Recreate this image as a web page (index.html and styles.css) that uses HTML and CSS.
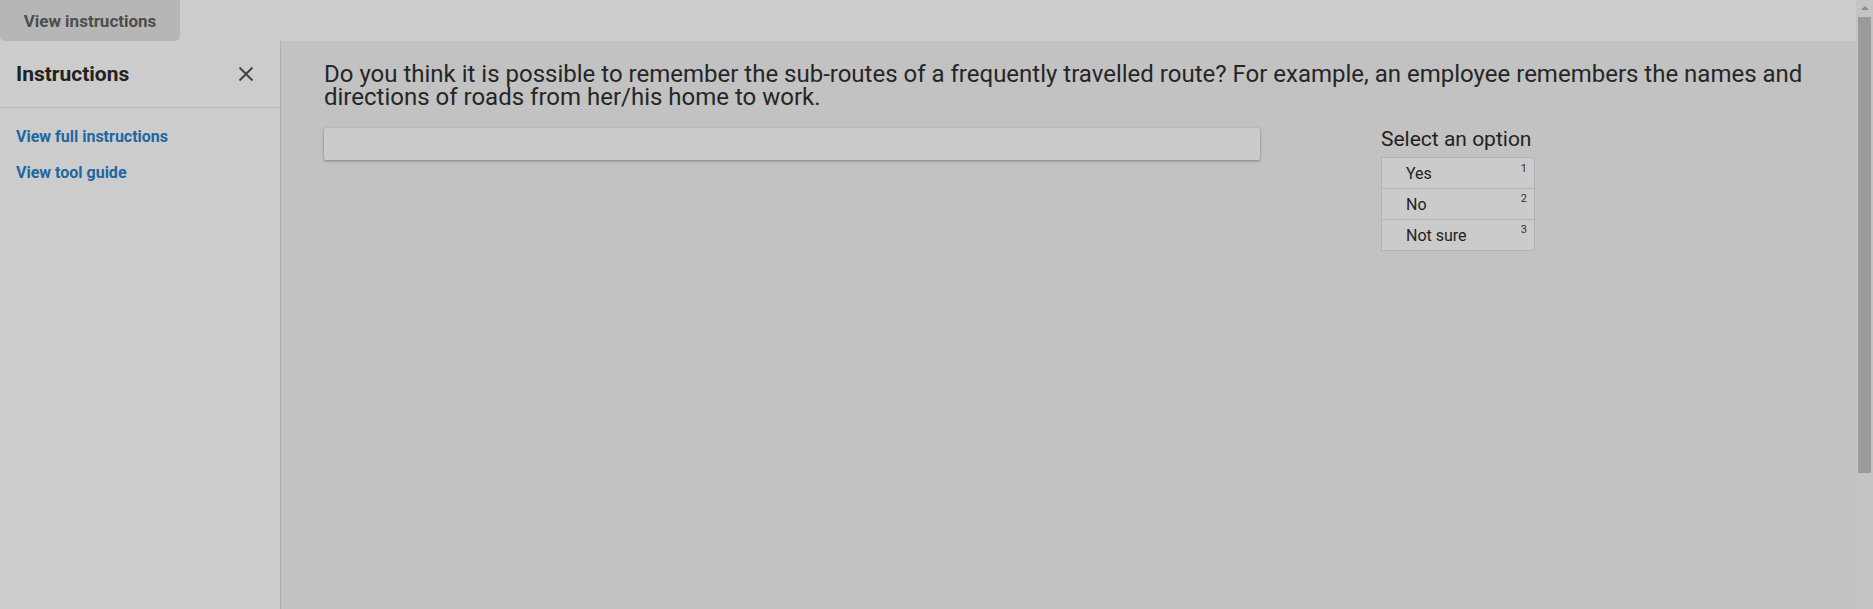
FILE: index.html
```html
<!DOCTYPE html>
<html>
<head>
<meta charset="utf-8">
<link rel="stylesheet" href="styles.css">
</head>
<body>
<div class="app">
  <div class="page">
    <div class="topbar">
      <button class="view-btn">View instructions</button>
    </div>
    <div class="body-row">
      <aside class="sidebar">
        <div class="side-head">
          <span class="side-title">Instructions</span>
          <svg class="close" width="16" height="16" viewBox="0 0 16 16"><path d="M1.5 1.5 L14.5 14.5 M14.5 1.5 L1.5 14.5" stroke="#444" stroke-width="2" fill="none"/></svg>
        </div>
        <div class="side-links">
          <a class="side-link">View full instructions</a>
          <a class="side-link">View tool guide</a>
        </div>
      </aside>
      <main class="main">
        <p class="question">Do you think it is possible to remember the sub-routes of a frequently travelled route? For example, an employee remembers the names and directions of roads from her/his home to work.</p>
        <div class="task">
          <div class="answer-box"></div>
          <div class="options">
            <div class="options-title">Select an option</div>
            <ul class="option-list">
              <li class="option"><span>Yes</span><sup class="key">1</sup></li>
              <li class="option"><span>No</span><sup class="key">2</sup></li>
              <li class="option"><span>Not sure</span><sup class="key">3</sup></li>
            </ul>
          </div>
        </div>
      </main>
    </div>
  </div>
  <div class="scrollbar">
    <div class="arrow"></div>
    <div class="thumb"></div>
  </div>
</div>
</body>
</html>
```

FILE: styles.css
```css
* { box-sizing: border-box; }
html, body { margin: 0; padding: 0; height: 100%; overflow: hidden; }
body {
  font-family: Roboto, "Liberation Sans", sans-serif;
  background: #c2c2c2;
  color: #222;
}
.app { display: flex; height: 609px; }
.page { flex: 1; display: flex; flex-direction: column; min-width: 0; }
.topbar {
  height: 41px;
  background: #cccccc;
  display: flex;
  flex-shrink: 0;
}
.view-btn {
  width: 180px;
  height: 41px;
  border: none;
  background: #b6b6b6;
  border-radius: 0 0 5px 5px;
  font-family: Roboto, "Liberation Sans", sans-serif;
  font-weight: 700;
  font-size: 17px;
  color: #4d4d4d;
  padding: 0;
  text-align: center;
}
.body-row { flex: 1; display: flex; min-height: 0; }
.sidebar {
  width: 281px;
  flex-shrink: 0;
  background: #cccccc;
  border-right: 1px solid #adadad;
}
.side-head {
  height: 67px;
  border-bottom: 1px solid #bababa;
  display: flex;
  align-items: center;
  justify-content: space-between;
  padding: 0 26px 0 16px;
}
.side-title { font-size: 21px; font-weight: 700; color: #222; }
.close { display: block; }
.side-links { display: flex; flex-direction: column; padding: 20px 16px 0; gap: 18px; }
.side-link {
  font-size: 16px;
  font-weight: 700;
  color: #1d67a3;
  line-height: 18px;
}
.main { flex: 1; padding: 22px 0 0 43px; min-width: 0; }
.question {
  margin: 0;
  font-size: 24px;
  line-height: 23px;
  color: #262626;
  max-width: 1500px;
}
.task { display: flex; margin-top: 19px; align-items: flex-start; }
.answer-box {
  width: 936px;
  height: 32px;
  background: #cbcbcb;
  border-radius: 2px;
  box-shadow: 0 1px 3px rgba(0,0,0,0.35);
  margin-right: 121px;
}
.options { margin-top: -1px; }
.options-title { font-size: 21px; line-height: 24px; color: #222; margin-bottom: 6px; }
.option-list { list-style: none; margin: 0; padding: 0; width: 154px; border: 1px solid #b4b4b4; }
.option {
  height: 30px;
  display: flex;
  align-items: center;
  justify-content: space-between;
  padding: 0 7px 0 24px;
  background: #cbcbcb;
  font-size: 16px;
  color: #222;
}
.option + .option { height: 31px; border-top: 1px solid #b4b4b4; }
.key { font-size: 11px; align-self: flex-start; margin-top: 5px; color: #333; line-height: 12px; }
.option + .option .key { margin-top: 4px; }
.scrollbar {
  width: 17px;
  flex-shrink: 0;
  background: #c4c4c4;
  display: flex;
  flex-direction: column;
  align-items: center;
  padding-top: 6px;
}
.arrow {
  width: 0; height: 0;
  border-left: 4px solid transparent;
  border-right: 4px solid transparent;
  border-bottom: 4px solid #8a8a8a;
}
.thumb { width: 13px; height: 456px; margin-top: 7px; background: #9b9b9b; }
```
